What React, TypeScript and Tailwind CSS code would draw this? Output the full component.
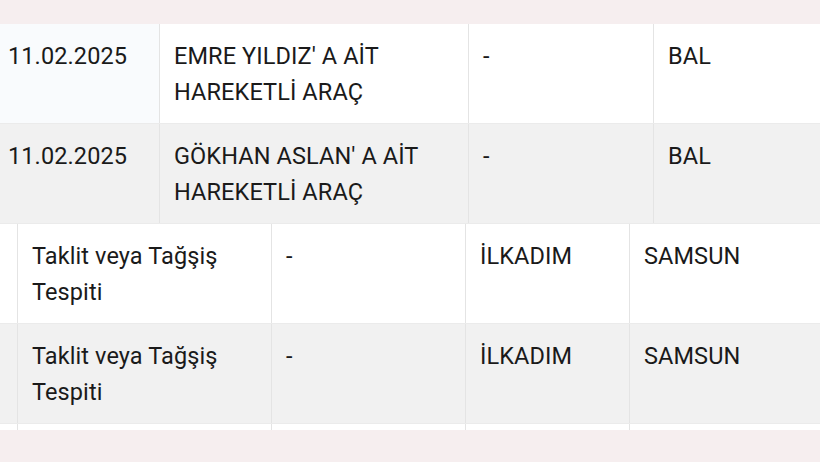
const topRows = [
  { date: "11.02.2025", name: ["EMRE YILDIZ' A AİT", "HAREKETLİ ARAÇ"], note: "-", product: "BAL", alt: false },
  { date: "11.02.2025", name: ["GÖKHAN ASLAN' A AİT", "HAREKETLİ ARAÇ"], note: "-", product: "BAL", alt: true },
];

const bottomRows = [
  { reason: ["Taklit veya Tağşiş", "Tespiti"], note: "-", district: "İLKADIM", city: "SAMSUN", alt: false },
  { reason: ["Taklit veya Tağşiş", "Tespiti"], note: "-", district: "İLKADIM", city: "SAMSUN", alt: true },
];

const cell = "border-r border-[#e4e4e4] px-[14px] pt-[14px] leading-[36px]";

export default function App() {
  return (
    <div className="w-[820px] h-[462px] overflow-hidden bg-[#f6eeef] font-['Roboto',sans-serif] text-[23.5px] tracking-[0.1px] text-[#1a1a1a]">
      <div className="h-[24px]" />

      {/* first table fragment */}
      {topRows.map((r, i) => (
        <div
          key={i}
          className={`grid grid-cols-[160px_309px_185px_1fr] h-[100px] border-b border-[#ebebeb] ${r.alt ? "bg-[#f1f1f1]" : "bg-white"}`}
        >
          <div className={`${cell} pl-[8px] ${r.alt ? "" : "bg-[#f9fbfd]"}`}>{r.date}</div>
          <div className={cell}>
            {r.name.map((l) => (
              <div key={l}>{l}</div>
            ))}
          </div>
          <div className={cell}>{r.note}</div>
          <div className={`${cell} border-r-0`}>{r.product}</div>
        </div>
      ))}

      {/* second table fragment */}
      {bottomRows.map((r, i) => (
        <div
          key={i}
          className={`grid grid-cols-[18px_254px_194px_164px_1fr] h-[100px] border-b border-[#ebebeb] ${r.alt ? "bg-[#f1f1f1]" : "bg-white"}`}
        >
          <div className="border-r border-[#e4e4e4]" />
          <div className={cell}>
            {r.reason.map((l) => (
              <div key={l}>{l}</div>
            ))}
          </div>
          <div className={cell}>{r.note}</div>
          <div className={cell}>{r.district}</div>
          <div className={`${cell} border-r-0`}>{r.city}</div>
        </div>
      ))}
      <div className="grid grid-cols-[18px_254px_194px_164px_1fr] h-[6px] bg-white">
        <div className="border-r border-[#e4e4e4]" />
        <div className="border-r border-[#e4e4e4]" />
        <div className="border-r border-[#e4e4e4]" />
        <div className="border-r border-[#e4e4e4]" />
        <div />
      </div>
    </div>
  );
}
